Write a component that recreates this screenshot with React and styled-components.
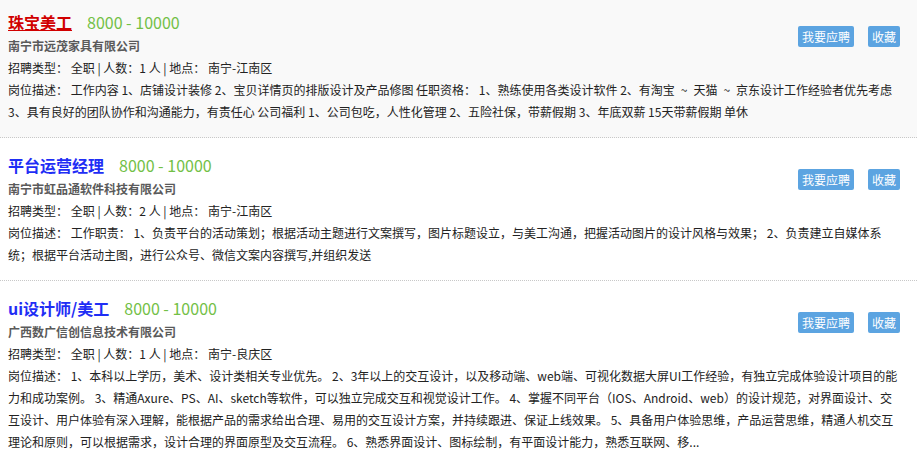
import React from "react";
import styled, { createGlobalStyle } from "styled-components";

const Global = createGlobalStyle`
  html, body { margin: 0; padding: 0; background: #fff; }
  body {
    font-family: "Microsoft YaHei", "Noto Sans CJK SC", "Noto Sans", sans-serif;
    color: #333;
    overflow: hidden;
  }
`;

const List = styled.div`
  display: flex;
  flex-direction: column;
  margin-top: -5px;
`;

const Card = styled.div`
  padding: 14px 15px 14px 8px;
  border-bottom: 1px dotted #c8c8c8;
  background: ${(p) => (p.$active ? "#f9f9f9" : "#fff")};
`;

const Header = styled.div`
  display: flex;
  justify-content: space-between;
  align-items: flex-start;
`;

const HeadInfo = styled.div`
  display: flex;
  flex-direction: column;
`;

const TitleRow = styled.div`
  display: flex;
  align-items: baseline;
  height: 26px;
  line-height: 26px;
`;

const Title = styled.a`
  font-size: 16px;
  font-weight: bold;
  color: ${(p) => (p.$active ? "#d10000" : "#1f2ef5")};
  text-decoration: ${(p) => (p.$active ? "underline" : "none")};
  cursor: pointer;
`;

const Salary = styled.span`
  margin-left: 15px;
  font-size: 16px;
  color: #72c046;
`;

const Company = styled.div`
  font-size: 12px;
  font-weight: bold;
  color: #5a5a5a;
  line-height: 22px;
`;

const Actions = styled.div`
  display: flex;
  gap: 14px;
  margin-top: 17px;
  margin-right: 2px;
`;

const Button = styled.button`
  height: 21px;
  padding: 0 4px;
  border: none;
  border-radius: 2px;
  background: #5ca4e1;
  color: #fff;
  font-family: inherit;
  font-size: 12px;
  line-height: 21px;
  cursor: pointer;
`;

const Line = styled.div`
  font-size: 12px;
  line-height: 22px;
  color: #222;
`;

const jobs = [
  {
    title: "珠宝美工",
    salary: "8000 - 10000",
    company: "南宁市远茂家具有限公司",
    count: 1,
    place: "南宁-江南区",
    desc:
      "工作内容 1、店铺设计装修 2、宝贝详情页的排版设计及产品修图 任职资格： 1、熟练使用各类设计软件 2、有淘宝\u2002~\u2002天猫\u2002~\u2002京东设计工作经验者优先考虑 3、具有良好的团队协作和沟通能力，有责任心 公司福利 1、公司包吃，人性化管理 2、五险社保，带薪假期 3、年底双薪 15天带薪假期 单休",
    active: true,
  },
  {
    title: "平台运营经理",
    salary: "8000 - 10000",
    company: "南宁市虹品通软件科技有限公司",
    count: 2,
    place: "南宁-江南区",
    desc:
      "工作职责： 1、负责平台的活动策划；根据活动主题进行文案撰写，图片标题设立，与美工沟通，把握活动图片的设计风格与效果； 2、负责建立自媒体系统；根据平台活动主图，进行公众号、微信文案内容撰写,并组织发送",
  },
  {
    title: "ui设计师/美工",
    salary: "8000 - 10000",
    company: "广西数广信创信息技术有限公司",
    count: 1,
    place: "南宁-良庆区",
    desc:
      "1、本科以上学历，美术、设计类相关专业优先。 2、3年以上的交互设计，以及移动端、web端、可视化数据大屏UI工作经验，有独立完成体验设计项目的能力和成功案例。 3、精通Axure、PS、AI、sketch等软件，可以独立完成交互和视觉设计工作。 4、掌握不同平台（IOS、Android、web）的设计规范，对界面设计、交互设计、用户体验有深入理解，能根据产品的需求给出合理、易用的交互设计方案，并持续跟进、保证上线效果。 5、具备用户体验思维，产品运营思维，精通人机交互理论和原则，可以根据需求，设计合理的界面原型及交互流程。 6、熟悉界面设计、图标绘制，有平面设计能力，熟悉互联网、移...",
  },
];

export default function App() {
  return (
    <>
      <Global />
      <List>
        {jobs.map((j) => (
          <Card key={j.title} $active={j.active}>
            <Header>
              <HeadInfo>
                <TitleRow>
                  <Title $active={j.active}>{j.title}</Title>
                  <Salary>{j.salary}</Salary>
                </TitleRow>
                <Company>{j.company}</Company>
              </HeadInfo>
              <Actions>
                <Button>我要应聘</Button>
                <Button>收藏</Button>
              </Actions>
            </Header>
            <Line>
              招聘类型： 全职 | 人数：{j.count} 人 | 地点： {j.place}
            </Line>
            <Line>岗位描述： {j.desc}</Line>
          </Card>
        ))}
      </List>
    </>
  );
}
